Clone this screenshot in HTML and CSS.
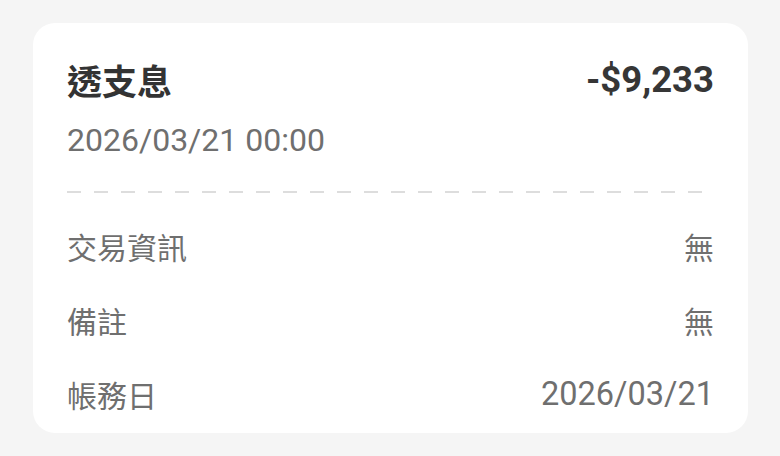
FILE: index.html
```html
<html>

<head>
    <meta charset="utf-8">
    <link rel="stylesheet" href="styles.css">
</head>

<body>
    <div class="card">
        <div class="card_head">
            <span class="title">透支息</span>
            <span class="amount">-$9,233</span>
        </div>
        <div class="time">2026/03/21 00:00</div>
        <div class="dash"></div>
        <div class="row">
            <span class="label">交易資訊</span>
            <span class="value">無</span>
        </div>
        <div class="row">
            <span class="label">備註</span>
            <span class="value">無</span>
        </div>
        <div class="row">
            <span class="label">帳務日</span>
            <span class="value num">2026/03/21</span>
        </div>
    </div>
</body>

</html>
```

FILE: styles.css
```css
body {
    margin: 0;
    padding: 23px 32px 0 33px;
    background-color: #f5f5f5;
    font-family: Roboto, "Noto Sans CJK TC", sans-serif;
}

.card {
    background-color: #ffffff;
    border-radius: 22px;
    padding: 36px 34px 0 34px;
    height: 410px;
    box-sizing: border-box;
}

.card_head {
    display: flex;
    justify-content: space-between;
    align-items: center;
    height: 40px;
}

.title {
    font-size: 35px;
    font-weight: 700;
    color: #333333;
}

.amount {
    font-size: 36.5px;
    font-weight: 700;
    color: #363636;
}

.time {
    font-size: 32px;
    line-height: 40px;
    margin-top: 21px;
    color: #6f6f6f;
}

.dash {
    height: 2px;
    margin-top: 31px;
    margin-bottom: 16px;
    background: repeating-linear-gradient(to right, #dddddd 0 14px, transparent 14px 27px);
}

.row {
    display: flex;
    justify-content: space-between;
    align-items: center;
    height: 74px;
    font-size: 30px;
    color: #6f6f6f;
}

.num {
    font-size: 32.5px;
}
```
